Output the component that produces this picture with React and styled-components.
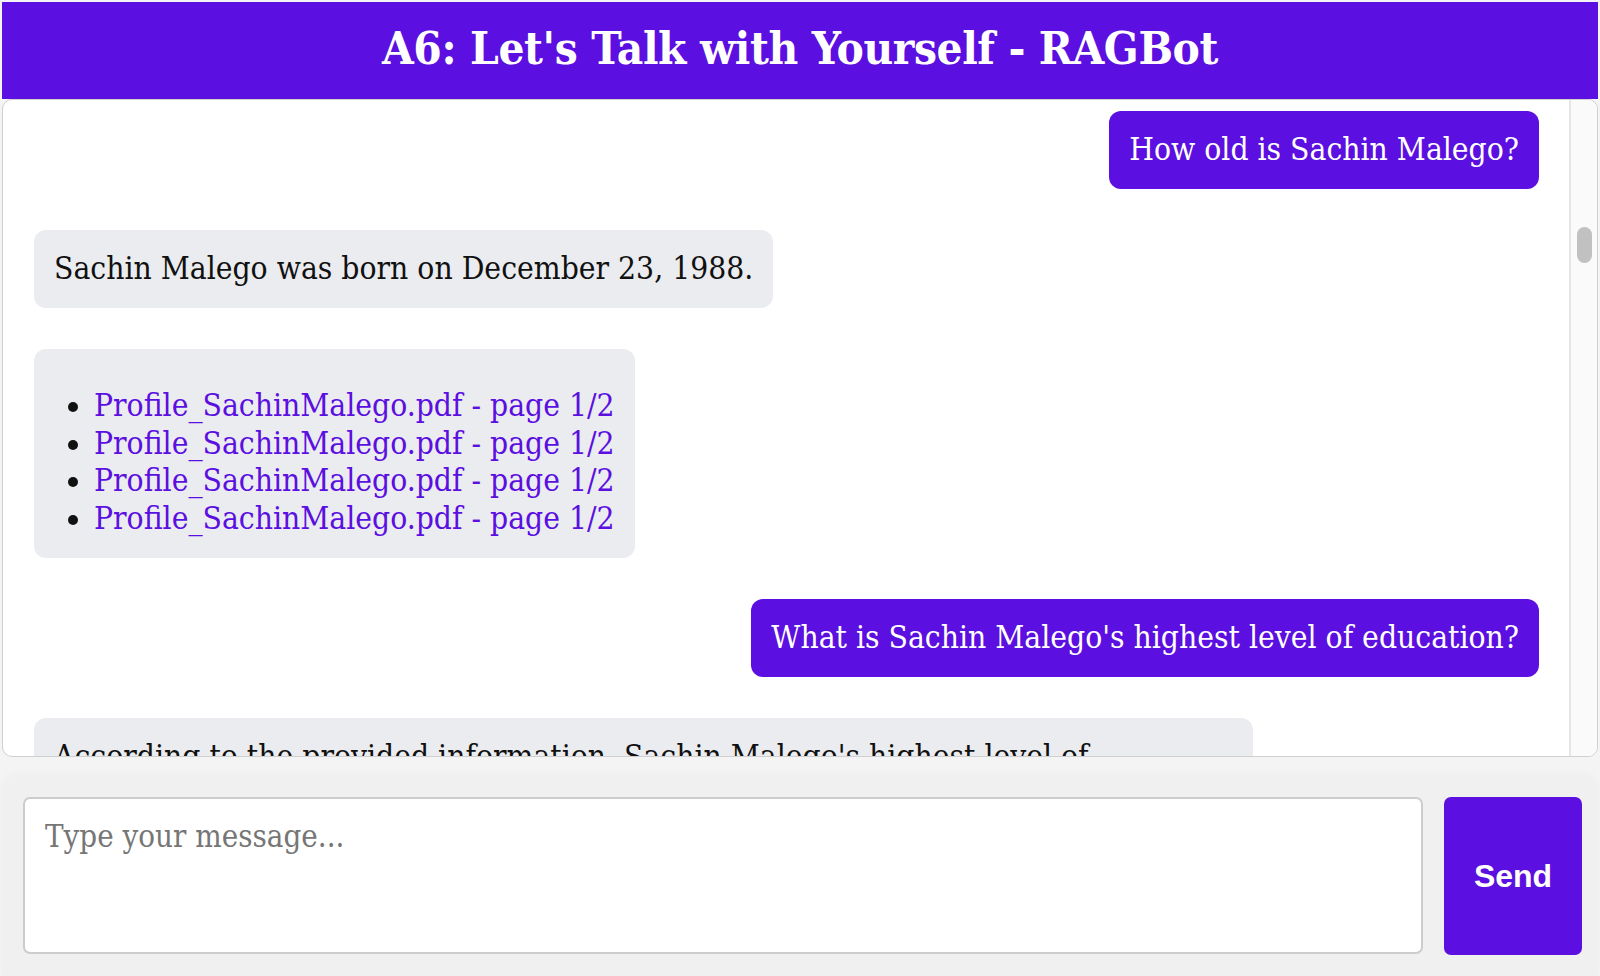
import React from "react";
import styled, { createGlobalStyle } from "styled-components";

const PURPLE = "#5b0fe0";
const SLAB = `"DejaVu Serif Condensed", "DejaVu Serif", serif`;

const GlobalStyle = createGlobalStyle`
  html, body {
    margin: 0;
    padding: 0;
    height: 100%;
    overflow: hidden;
    background: #f4f4f4;
  }
  #root { height: 100%; }
  * { box-sizing: border-box; }
`;

const Page = styled.div`
  height: 976px;
  display: flex;
  flex-direction: column;
  padding: 2px 2px 0 2px;
  background: #f4f4f4;
  font-family: ${SLAB};
`;

const Header = styled.header`
  height: 97px;
  flex: none;
  background: ${PURPLE};
  display: flex;
  align-items: center;
  justify-content: center;
  padding-bottom: 4px;
`;

const Title = styled.h1`
  margin: 0;
  color: #fff;
  font-family: ${SLAB};
  font-weight: 700;
  font-size: 45.5px;
  letter-spacing: -0.4px;
  line-height: 1;
`;

const ChatBox = styled.section`
  height: 658px;
  flex: none;
  display: flex;
  background: #fff;
  border: 1px solid #cfcfcf;
  border-radius: 10px;
  overflow: hidden;
`;

const Messages = styled.div`
  flex: 1;
  min-width: 0;
  overflow: hidden;
  padding: 11px 30px 0 31px;
  display: flex;
  flex-direction: column;
  gap: 41px;
`;

const Bubble = styled.div`
  max-width: 81%;
  align-self: ${(p) => (p.$user ? "flex-end" : "flex-start")};
  background: ${(p) => (p.$user ? PURPLE : "#ebecef")};
  color: ${(p) => (p.$user ? "#fff" : "#111")};
  border-radius: 12px;
  padding: 19px 20px 21px;
  font-size: 31.5px;
  line-height: 38px;
  flex: none;
`;

const SourceList = styled.ul`
  margin: 19px 0 0 0;
  padding-left: 40px;
`;

const SourceItem = styled.li`
  line-height: 37.5px;
`;

const SourceLink = styled.a`
  color: ${PURPLE};
  text-decoration: none;
`;

const ScrollTrack = styled.div`
  width: 28px;
  flex: none;
  background: #fafafa;
  border-left: 2px solid #e6e6e6;
  display: flex;
  justify-content: center;
`;

const ScrollThumb = styled.div`
  margin-top: 127px;
  width: 15px;
  height: 36px;
  border-radius: 8px;
  background: #c1c1c1;
`;

const InputBar = styled.div`
  margin-top: 19px;
  flex: 1;
  display: flex;
  gap: 21px;
  padding: 21px 16px 0 21px;
  background: #f0f0f0;
  border-radius: 14px 14px 0 0;
  box-shadow: 0 -3px 8px rgba(0, 0, 0, 0.025);
`;

const MessageInput = styled.textarea`
  flex: 1;
  height: 157px;
  resize: none;
  border: 2px solid #cccccc;
  border-radius: 7px;
  background: #fff;
  padding: 18px 20px;
  font-family: ${SLAB};
  font-size: 31px;
  line-height: 38px;
  color: #111;
  outline: none;
  &::placeholder { color: #767676; }
`;

const SendButton = styled.button`
  width: 138px;
  height: 158px;
  flex: none;
  border: none;
  border-radius: 7px;
  background: ${PURPLE};
  color: #fff;
  font-family: "Liberation Sans", Arial, sans-serif;
  font-weight: 700;
  font-size: 32px;
  cursor: pointer;
`;

const sources = Array.from({ length: 4 }, () => "Profile_SachinMalego.pdf - page 1/2");

export default function App() {
  return (
    <>
      <GlobalStyle />
      <Page>
        <Header>
          <Title>A6: Let's Talk with Yourself - RAGBot</Title>
        </Header>
        <ChatBox>
          <Messages>
            <Bubble $user>How old is Sachin Malego?</Bubble>
            <Bubble>Sachin Malego was born on December 23, 1988.</Bubble>
            <Bubble>
              <SourceList>
                {sources.map((s, i) => (
                  <SourceItem key={i}>
                    <SourceLink href="#">{s}</SourceLink>
                  </SourceItem>
                ))}
              </SourceList>
            </Bubble>
            <Bubble $user>What is Sachin Malego's highest level of education?</Bubble>
            <Bubble>
              According to the provided information, Sachin Malego's highest level of education is a Master's degree.
            </Bubble>
          </Messages>
          <ScrollTrack>
            <ScrollThumb />
          </ScrollTrack>
        </ChatBox>
        <InputBar>
          <MessageInput placeholder="Type your message..." />
          <SendButton>Send</SendButton>
        </InputBar>
      </Page>
    </>
  );
}
